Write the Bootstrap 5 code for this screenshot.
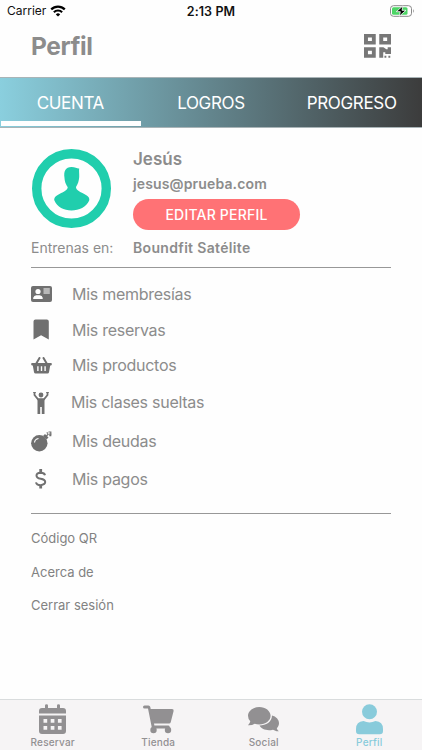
<!DOCTYPE html>
<html lang="es">
<head>
<meta charset="utf-8">
<meta name="viewport" content="width=device-width, initial-scale=1">
<title>Perfil</title>
<link href="https://cdn.jsdelivr.net/npm/bootstrap@5.3.0/dist/css/bootstrap.min.css" rel="stylesheet">
<style>
body{font-family:Inter,"Liberation Sans",sans-serif;color:#8c8c8c;background:#fefefe;line-height:1.2}
svg{display:block;flex:none}
.app{height:750px}
.status{height:22px;font-size:12px;color:#111;padding:0 7px}
.status>*{flex:1 1 0}
.clock{font-weight:600;font-size:12.5px;letter-spacing:.1px}
.top{height:55px;padding:0 31px}
.title{font-size:24.5px;font-weight:700;letter-spacing:-.4px;line-height:1;margin-top:-6px}
.tabs{height:51px;background:linear-gradient(90deg,#8acfde,#63858d 50%,#3c3c3c);border-top:1px solid #a9b4b7;border-bottom:1px solid #a9b4b7}
.tabs a{color:#fff;text-decoration:none;font-size:17px;letter-spacing:-.33px;line-height:50px;width:33.333%;text-align:center}
.tabs a span{display:block;height:43px}
.tabs a.on::after{content:"";display:block;height:5px;background:#fff;margin:0 0 0 1px}
.who{height:106px;padding-top:21px}
.avatar{width:102px;padding-left:1px}
.main{padding:0 31px}
.name{font-size:17px;font-weight:600;line-height:20px}
.mail{font-size:14px;font-weight:600;line-height:18px;margin-top:6px;letter-spacing:.14px}
.edit{width:167px;height:31px;background:#ff7275;color:#fff;font-size:14px;font-weight:500;margin-top:6px;border:0;padding:0;letter-spacing:.2px}
.gym{height:33px;font-size:14px;padding-top:2px}
.gym b{font-weight:600;letter-spacing:.33px}
.rule{height:1px;background:#989898}
.menu{padding-top:8.5px;height:245px;font-size:16px;letter-spacing:-.27px}
.menu .ico+span{padding-top:1px}
.item{height:38px}
.item.tight{height:35.5px}
.item.tall{height:39px}
.item.tall .ico{width:40px}
.ico{width:41px;color:#707070}
.links{font-size:13px;padding-top:8px}
.links a{color:#828282;text-decoration:none;height:33.6px}
.dock{height:51px;background:#f6f4f5;border-top:1px solid #d9dcdd;font-size:10px;font-weight:500;letter-spacing:.2px;color:#929092}
.dock a{color:inherit;text-decoration:none;width:25%;padding-top:4px}
.dock a.on{color:#89cbdb}
.dock span{line-height:12px;margin-top:1px}
</style>
<script src="https://cdn.jsdelivr.net/npm/bootstrap@5.3.0/dist/js/bootstrap.bundle.min.js"></script>
</head>
<body>
<div class="app d-flex flex-column overflow-hidden">
<div class="status d-flex align-items-center">
  <div class="d-flex align-items-center"><span>Carrier</span>
  <svg class="ms-1" width="16" height="12" viewBox="0 0 16 12"><g fill="none" stroke="#000" stroke-width="2.2"><path d="M1.2 4.4a9.6 9.6 0 0 1 13.6 0M3.9 7.2a5.8 5.8 0 0 1 8.2 0"/></g><path d="M8 11.6 5.8 9.4a3.2 3.2 0 0 1 4.4 0z"/></svg></div>
  <div class="clock text-center"><span>2:13 PM</span></div>
  <div class="d-flex justify-content-end"><svg width="25" height="12" viewBox="0 0 25 12"><rect x=".5" y=".7" width="21" height="10.6" rx="3" fill="#fff" stroke="#888"/><rect x="2" y="2.2" width="15.5" height="7.6" rx="1.5" fill="#4cd565"/><path d="M23 4q1.5 2 0 4z" fill="#777"/><path d="M13 .8 6.3 6.7h4L9.3 11.2 16 5.3h-4z" fill="#000" stroke="#fff" stroke-width=".8"/></svg></div>
</div>
<header class="top d-flex align-items-center justify-content-between">
  <h1 class="title mb-0"><span>Perfil</span></h1>
  <svg width="27" height="24" viewBox="0 0 26 23.5" preserveAspectRatio="none" class="mb-2" fill="#777" fill-rule="evenodd"><path d="M0 0h11.300v10.300H0zM3.800 3.500v3.400h3.800V3.500zM14.700 0H26v10.300H14.700zM18.500 3.500v3.400h3.800V3.500zM0 12.900h11.300v10.300H0zM3.800 16.400v3.400h3.800V16.400zM14.700 12.900h4l2.800 2.100h1.300v-2.100H26v6.700h-5.500v-1.800h-2v5.400h-3.800zM19.700 21.400h1.800v1.800h-1.800zM23.500 21.400h1.800v1.800h-1.800z"/></svg>
</header>
<nav class="tabs d-flex">
  <a href="#" class="on"><span>CUENTA</span></a><a href="#"><span>LOGROS</span></a><a href="#"><span>PROGRESO</span></a>
</nav>
<main class="main flex-grow-1">
  <section class="who d-flex">
    <div class="avatar"><svg width="79" height="79" viewBox="0 0 79 79"><circle cx="39.500" cy="39.500" r="34.800" fill="none" stroke="#20cead" stroke-width="9.400"/><path fill="#20cead" d="M39.500 18c-6 0-8 4-7 11 .3 5 2.200 7.500 3.200 9 .5 3-5.500 5.500-10 8-3 1.500-4 4-3.300 5.500C25 58 32 61.500 39.500 61.500S54.500 58 57.200 51.500c.6-2-.5-4-3.200-5.500-4.500-2.500-10.500-5-10-8 1.800-3 3-6 3.200-10 .2-3-.4-6 0-8.500-2 .3-3.800-1.500-7.700-1.500z"/></svg></div>
    <div>
      <div class="name"><span>Jesús</span></div>
      <div class="mail"><span>jesus@prueba.com</span></div>
      <button class="btn edit rounded-pill d-block"><span>EDITAR PERFIL</span></button>
    </div>
  </section>
  <div class="gym d-flex"><div class="avatar ps-0 pt-1"><span>Entrenas en:</span></div><b class="pt-1">Boundfit Satélite</b></div>
  <div class="rule"></div>
  <div class="menu">
    <div class="item tight d-flex align-items-center"><div class="ico"><svg width="21" height="16" viewBox="0 0 21 16"><rect width="21" height="16" rx="2" fill="currentColor"/><circle cx="7" cy="5.500" r="2.600" fill="#fff"/><path d="M2.200 13v-1.200Q3 9.200 5.300 9.200h3.400q2.500 0 3 2.600V13zM12.500 2.500h6.300v1h-6.300zM12.500 4.500h6.300v1h-6.300zM12.500 6.500h6.300v1h-6.300z" fill="#fff"/></svg></div><span>Mis membresías</span></div>
    <div class="item tight d-flex align-items-center"><div class="ico"><svg width="21" height="21" viewBox="0 0 21 21"><path d="M2.500 2.500Q2.500.5 4.500.5h11.300q2 0 2 2V20.500l-7.700-4.300-7.600 4.300z" fill="currentColor"/></svg></div><span>Mis reservas</span></div>
    <div class="item tight d-flex align-items-center"><div class="ico"><svg width="21" height="17" viewBox="0 0 21 17"><path d="M5 7 8.500 1M16 7 12.500 1" stroke="currentColor" stroke-width="2" stroke-linecap="round"/><path fill="currentColor" fill-rule="evenodd" d="M1 6h19q.8 0 .8.800v.8q0 .8-.8.800h-.8l-1.200 6.800q-.2 1.300-1.600 1.300H4.600q-1.300 0-1.600-1.300L1.800 8.400H1q-.8 0-.8-.8v-.8Q.200 6 1 6zM6.200 9.200v4.800h1.400V9.200zM9.800 9.200v4.800h1.400V9.200zM13.400 9.200v4.800h1.400V9.200z"/></svg></div><span>Mis productos</span></div>
    <div class="item tall d-flex align-items-center"><div class="ico"><svg width="21" height="24" viewBox="0 0 21 24"><circle cx="10" cy="4" r="2.400" fill="currentColor"/><path d="M3.500 1.500V4l3.500 4.300h6L16.500 4V1.500" fill="none" stroke="currentColor" stroke-width="1.800"/><path d="M3.500 2V1M16.500 2V1" stroke="currentColor" stroke-width="2.600"/><path d="M6.500 7.500h7V23H10.800v-7H9.200v7H6.500z" fill="currentColor"/></svg></div><span>Mis clases sueltas</span></div>
    <div class="item d-flex align-items-center"><div class="ico"><svg width="21" height="21" viewBox="0 0 21 21"><circle cx="8.300" cy="12.300" r="8.200" fill="currentColor"/><path d="m12 5 2-2 3.500 3.500-2 2z" fill="currentColor"/><path d="M3.500 11.500q.5-3.500 4-4" fill="none" stroke="#fff" stroke-width="1.200"/><path d="m15.300 5 2.200-2M15.700 1.600l1.300.8M17.500 1h2.300v3.500M18 3.200h2.500M18.300 4.600h2" fill="none" stroke="currentColor" stroke-width="1.200"/></svg></div><span>Mis deudas</span></div>
    <div class="item d-flex align-items-center"><div class="ico"><svg width="21" height="20" viewBox="0 0 21 20"><path d="M14 6.200Q13.500 3.700 9.700 3.700q-4.200.2-4.200 2.800T9.700 9.800q4.500.8 4.500 3.300T9.700 16.200q-4.200 0-4.700-2.800" fill="none" stroke="currentColor" stroke-width="2"/><path d="M8.300 0h2.800v4H8.300zM8.300 16h2.800v3.500H8.300z" fill="currentColor"/></svg></div><span>Mis pagos</span></div>
  </div>
  <div class="rule"></div>
  <div class="links d-flex flex-column"><a href="#" class="d-flex align-items-center"><span>Código QR</span></a><a href="#" class="d-flex align-items-center"><span>Acerca de</span></a><a href="#" class="d-flex align-items-center"><span>Cerrar sesión</span></a></div>
</main>
<nav class="dock d-flex">
  <a href="#" class="d-flex flex-column align-items-center"><svg width="27" height="31" viewBox="0 0 27 31" fill="currentColor"><path d="M6 1.500Q6 .300 7.500.300T9 1.500V4h9V1.500Q18 .300 19.500.300T21 1.500V4h3q3 0 3 3v2.500H0V7q0-3 3-3h3z"/><path fill-rule="evenodd" d="M0 11.500h27V27q0 3-3 3H3q-3 0-3-3zM4.500 15v3.700h3.700V15zM11.700 15v3.700h3.700V15zM18.900 15v3.700h3.700V15zM4.500 22v3.700h3.700V22zM11.700 22v3.700h3.700V22zM18.900 22v3.700h3.700V22z"/></svg><span>Reservar</span></a>
  <a href="#" class="d-flex flex-column align-items-center"><svg width="31" height="31" viewBox="0 0 31 31" fill="currentColor"><path d="M1.500 1.500h4q1.500 0 1.800 1.500l.4 2H29q2 0 1.600 2l-2.800 11q-.3 1.500-1.800 1.500H11l.4 2h14q1.600 0 1.200 1.700l-.3 1.200H10.200q-1.200 0-1.500-1.300L5 4.500H1.500Q0 4.500 0 3t1.500-1.500z"/><circle cx="10.500" cy="26" r="3.200"/><circle cx="25" cy="26" r="3.200"/></svg><span>Tienda</span></a>
  <a href="#" class="d-flex flex-column align-items-center"><svg width="31" height="31" viewBox="0 0 31 31" fill="currentColor"><path d="M24 11.500c4 1 7 4 7 7.700 0 2-1 3.800-2.200 5 .3 1.200 1 2.200 2 3-2.300.2-4-.5-5.800-1.500-6 1.500-11.500-.5-13.500-4.200C18 21.500 24 18 24 11.500z"/><path d="M11.300 3C17.500 3 22.600 7 22.600 11.800S17.500 20.500 11.300 20.500q-2.500 0-4.600-.7Q4 21.500 0 21.300q2-2 2.300-4Q0 15 0 11.800C0 7 5 3 11.300 3z"/></svg><span>Social</span></a>
  <a href="#" class="on d-flex flex-column align-items-center"><svg width="27" height="31" viewBox="0 0 27 31" fill="currentColor"><circle cx="13.500" cy="7.800" r="7.500"/><path d="M7.500 17q6 2.800 12 0 7.500.5 7.500 8V27q0 3.200-3.200 3.200H3.200Q0 30.200 0 27v-2q0-7.500 7.500-8z"/></svg><span>Perfil</span></a>
</nav>
</div>
</body>
</html>
